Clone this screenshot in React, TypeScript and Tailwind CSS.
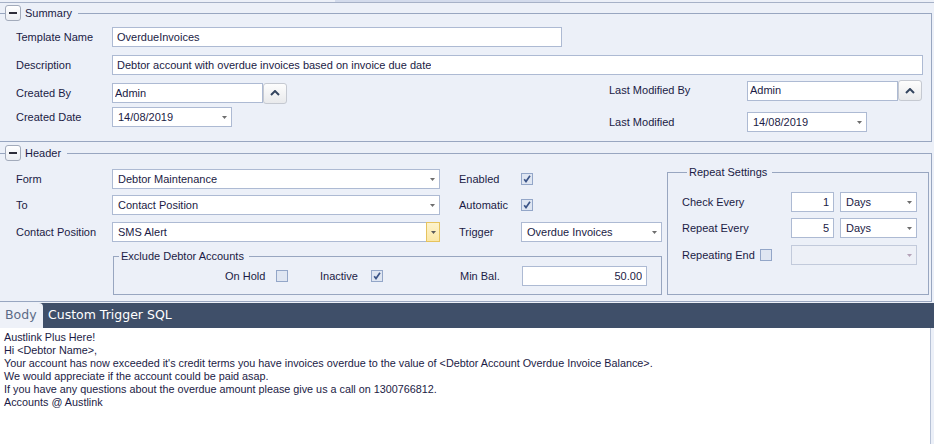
import React from "react";

function CollapseBtn() {
  return (
    <span className="flex h-[16px] w-[16px] items-center justify-center rounded-[3px] border border-[#a3abbb] bg-linear-to-b from-white to-[#eceef3]">
      <span className="h-[2px] w-[8px] bg-[#2e2e3a]" />
    </span>
  );
}

function Arrow({ color = "#6e6e6e" }: { color?: string }) {
  return (
    <svg width="5" height="3" viewBox="0 0 5 3">
      <path d="M0 0h5L2.5 3z" fill={color} />
    </svg>
  );
}

function Combo({
  value,
  w,
  yellow,
  disabled,
}: {
  value: string;
  w: string;
  yellow?: boolean;
  disabled?: boolean;
}) {
  return (
    <div
      className={`flex h-[20px] ${w} items-center border ${
        disabled ? "border-[#c2cadb] bg-[#edf0f7]" : "border-[#adbad3] bg-white"
      }`}
    >
      <span className="flex-1 truncate pl-[5px]">{value}</span>
      {yellow ? (
        <span className="-my-px -mr-px flex h-[20px] w-[14px] items-center justify-center border border-[#e6c35e] bg-linear-to-b from-[#fdf3cc] to-[#fbe7a6]">
          <Arrow color="#5a5a5a" />
        </span>
      ) : (
        <span className="flex w-[13px] justify-center">
          <Arrow color={disabled ? "#b4a2b8" : "#6e6e6e"} />
        </span>
      )}
    </div>
  );
}

function TextBox({
  value,
  w,
  pl = "pl-[4px]",
  right,
}: {
  value: string;
  w: string;
  pl?: string;
  right?: boolean;
}) {
  return (
    <div
      className={`flex h-[20px] ${w} items-center border border-[#adbad3] bg-white ${
        right ? "justify-end pr-[4px]" : pl
      }`}
    >
      <span className="truncate">{value}</span>
    </div>
  );
}

function UpBtn() {
  return (
    <span className="flex h-[21px] w-[24px] items-center justify-center rounded-[3px] border border-[#c5c9d1] bg-linear-to-b from-[#fdfdfd] to-[#e9eaec]">
      <svg width="10" height="6" viewBox="0 0 10 6">
        <path d="M1 5 L5 1 L9 5" stroke="#34455f" strokeWidth="2" fill="none" />
      </svg>
    </span>
  );
}

function Check({ checked }: { checked?: boolean }) {
  return (
    <span className="flex h-[12px] w-[12px] items-center justify-center border border-[#93a6c8] bg-[#dfe6f2]">
      {checked && (
        <svg width="8" height="8" viewBox="0 0 8 8">
          <path d="M1.2 4.2 L3 6.5 L7 0.8" stroke="#3b5487" strokeWidth="1.7" fill="none" />
        </svg>
      )}
    </span>
  );
}

export default function App() {
  return (
    <div className="flex h-[444px] w-[934px] flex-col overflow-hidden bg-[#ecf0f8] font-['Liberation_Sans',Arial,sans-serif] text-[11px] text-[#1b1b45]">
      {/* top strip */}
      <div className="flex h-[2px]">
        <div className="w-[335px]" />
        <div className="w-[225px] bg-[#d3dbec]" />
      </div>
      <div className="h-px bg-[#a6b1c7]" />
      <div className="h-[2px]" />

      {/* Summary */}
      <fieldset className="w-[932px] border-t border-r border-b border-[#98a6c0] pt-[6px] pb-[9px]">
        <legend className="ml-[5px] flex h-[16px] items-center pr-[6px]">
          <CollapseBtn />
          <span className="ml-[4px]">Summary</span>
        </legend>
        <div className="flex h-[20px] items-center pl-[16px]">
          <span className="w-[96px]">Template Name</span>
          <TextBox value="OverdueInvoices" w="w-[450px]" />
        </div>
        <div className="mt-[8px] flex h-[20px] items-center pl-[16px]">
          <span className="w-[96px]">Description</span>
          <TextBox value="Debtor account with overdue invoices based on invoice due date" w="w-[811px]" />
        </div>
        <div className="mt-[5px] flex">
          <div className="flex w-[609px] flex-col gap-[4px] pt-[3px] pl-[16px]">
            <div className="flex h-[20px] items-center">
              <span className="w-[96px]">Created By</span>
              <TextBox value="Admin" w="w-[151px]" pl="pl-[2px]" />
              <UpBtn />
            </div>
            <div className="flex h-[20px] items-center">
              <span className="w-[96px]">Created Date</span>
              <Combo value="14/08/2019" w="w-[120px]" />
            </div>
          </div>
          <div className="flex flex-col gap-[11px]">
            <div className="flex h-[21px] items-center">
              <span className="w-[138px]">Last Modified By</span>
              <TextBox value="Admin" w="w-[151px]" pl="pl-[2px]" />
              <UpBtn />
            </div>
            <div className="flex h-[20px] items-center">
              <span className="w-[138px]">Last Modified</span>
              <Combo value="14/08/2019" w="w-[120px]" />
            </div>
          </div>
        </div>
      </fieldset>

      {/* Header */}
      <fieldset className="mt-[3px] w-[932px] border-t border-r border-b border-[#98a6c0] pt-[4px] pb-[6px]">
        <legend className="ml-[5px] flex h-[16px] items-center pr-[6px]">
          <CollapseBtn />
          <span className="ml-[4px]">Header</span>
        </legend>
        <div className="flex">
          <div className="w-[662px] pt-[4px]">
            <div className="flex h-[20px] items-center pl-[16px]">
              <span className="w-[96px]">Form</span>
              <Combo value="Debtor Maintenance" w="w-[328px]" />
              <span className="ml-[19px] w-[62px]">Enabled</span>
              <Check checked />
            </div>
            <div className="mt-[6px] flex h-[20px] items-center pl-[16px]">
              <span className="w-[96px]">To</span>
              <Combo value="Contact Position" w="w-[328px]" />
              <span className="ml-[19px] w-[62px]">Automatic</span>
              <Check checked />
            </div>
            <div className="mt-[7px] flex h-[20px] items-center pl-[16px]">
              <span className="w-[96px]">Contact Position</span>
              <Combo value="SMS Alert" w="w-[328px]" yellow />
              <span className="ml-[19px] w-[62px]">Trigger</span>
              <Combo value="Overdue Invoices" w="w-[141px]" />
            </div>
            <fieldset className="mt-[7px] ml-[113px] w-[549px] border border-[#98a6c0] pt-[3px] pb-[8px]">
              <legend className="ml-[5px] h-[14px] px-[2px] pr-[5px] leading-[14px]">
                Exclude Debtor Accounts
              </legend>
              <div className="flex h-[20px] items-center pl-[111px]">
                <span className="w-[51px]">On Hold</span>
                <Check />
                <span className="ml-[32px] w-[51px]">Inactive</span>
                <Check checked />
                <span className="ml-[77px] w-[62px]">Min Bal.</span>
                <TextBox value="50.00" w="w-[125px]" right />
              </div>
            </fieldset>
          </div>
          <fieldset className="ml-[5px] w-[262px] border border-[#98a6c0] pt-[13px] pb-[29px] pl-[14px]">
            <legend className="ml-[5px] h-[14px] px-[2px] pr-[5px] leading-[14px]">
              Repeat Settings
            </legend>
            <div className="flex h-[20px] items-center">
              <span className="w-[109px]">Check Every</span>
              <TextBox value="1" w="w-[43px]" right />
              <span className="ml-[6px]">
                <Combo value="Days" w="w-[77px]" />
              </span>
            </div>
            <div className="mt-[6px] flex h-[20px] items-center">
              <span className="w-[109px]">Repeat Every</span>
              <TextBox value="5" w="w-[43px]" right />
              <span className="ml-[6px]">
                <Combo value="Days" w="w-[77px]" />
              </span>
            </div>
            <div className="mt-[7px] flex h-[20px] items-center">
              <span className="w-[78px]">Repeating End</span>
              <Check />
              <span className="ml-[19px]">
                <Combo value="" w="w-[126px]" disabled />
              </span>
            </div>
          </fieldset>
        </div>
      </fieldset>

      {/* Tabs */}
      <div className="mt-[1px] flex h-[25px] items-stretch bg-[#3f4f69] font-['DejaVu_Sans',sans-serif] text-[12.5px]">
        <div className="flex w-[43px] items-center rounded-tr-[4px] bg-[#eef1f8] pl-[5px] text-[#5b6b86]">
          Body
        </div>
        <div className="flex items-center pl-[5px] text-white">Custom Trigger SQL</div>
      </div>

      {/* Body content */}
      <div className="w-[931px] flex-1 border-r border-[#b7c2d6] bg-white pt-[3px] pl-[4px] text-[10.8px] leading-[13px]">
        <div>Austlink Plus Here!</div>
        <div>Hi &lt;Debtor Name&gt;,</div>
        <div>
          Your account has now exceeded it's credit terms you have invoices overdue to the value of &lt;Debtor Account
          Overdue Invoice Balance&gt;.
        </div>
        <div>We would appreciate if the account could be paid asap.</div>
        <div>If you have any questions about the overdue amount please give us a call on 1300766812.</div>
        <div>Accounts @ Austlink</div>
      </div>
    </div>
  );
}
